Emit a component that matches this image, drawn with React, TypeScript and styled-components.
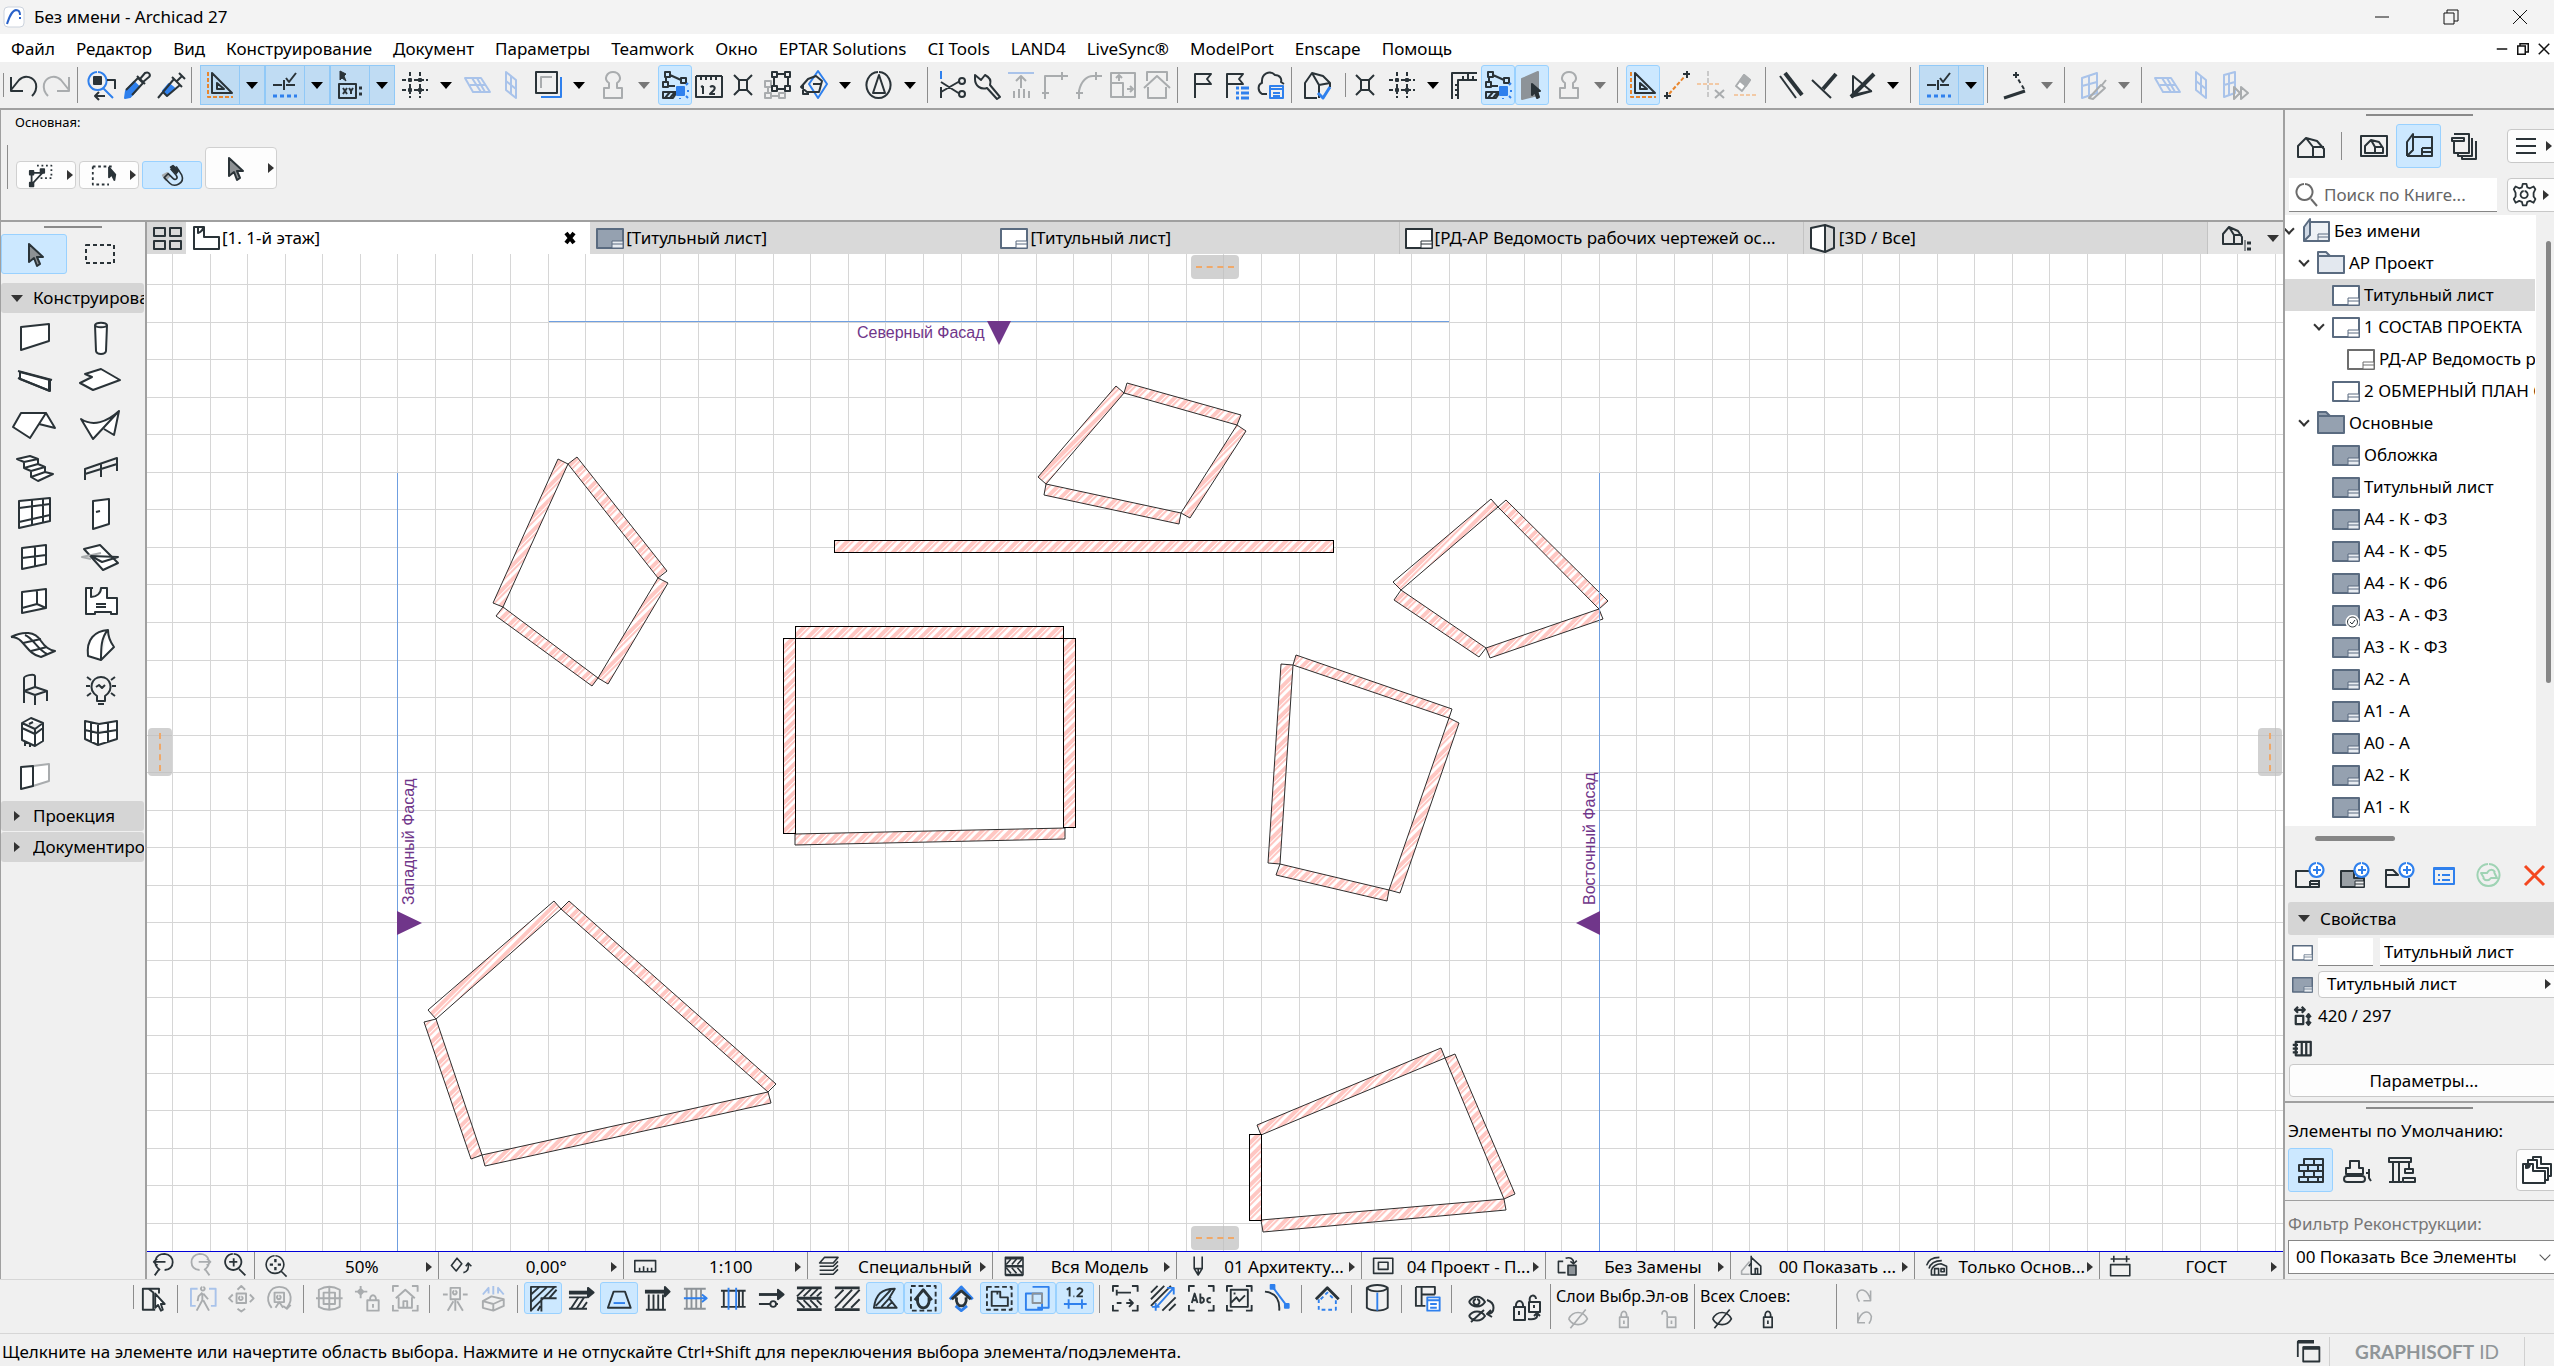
import React from "react";
import styled, { createGlobalStyle, css } from "styled-components";

const ink = "#2a3338";
const blue = "#2f80ed";
const grey = "#a9acae";
const pale = "#a9c3ea";
const orange = "#e8862e";
const peach = "#f2c9a5";
const line = "#a0a0a0";
const slate = "#5a6b80";
const steel = "#95a1b0";

const Global = createGlobalStyle`
  * { box-sizing: border-box; }
  html, body, #root { margin: 0; height: 100%; overflow: hidden; }
  body { background: #f0f0f0; color: #000; font: 17px/24px "Noto Sans", "Open Sans", sans-serif; }
  button, input, select { font: inherit; color: inherit; margin: 0; }
  button { background: none; border: 0; padding: 0; }
`;

/* ---------- icons ---------- */

type Stroke = { c?: string; d: string; f?: string; w?: number; dash?: string };

const icons: Record<string, Stroke[]> = {
  undo: [{ d: "M2 6V20H14M2 19L10 9C16 3 25 6 27 13C28 18 26 22 23 25" }],
  redo: [{ c: grey, d: "M26 6V20H14M26 19L18 9C12 3 3 6 1 13C0 18 2 22 5 25" }],
  find: [
    { c: blue, d: "M9 1A9 9 0 1 1 8 1M14 17L24 27", w: 2 },
    { f: ink, d: "M5 6H12V13H5z" },
    { d: "M18 9H26V18M6 25H16M10 21L6 25L10 29" },
  ],
  pick: [
    { c: blue, f: blue, d: "M3 20L11 11L16 16L7 26L2 27z" },
    { d: "M3 19L15 7L20 12L9 24M14 5L22 13M17 8L22 2C26 0 28 4 26 6L20 11" },
  ],
  inject: [
    { c: blue, f: blue, d: "M6 20L12 13L17 17L10 24z" },
    { d: "M1 27L6 21L17 8L23 14L10 25L6 21M15 6L25 16M20 10L25 5M22 2L28 8" },
  ],
  tri: [
    { c: orange, d: "M2 1V26H27", dash: "4 2" },
    { d: "M6 2V22H26zM11 12V18H18z" },
  ],
  snap: [
    { d: "M2 14H11M15 14H24M13 9V19M15 7L18 11L25 2" },
    { c: blue, d: "M2 25H26", dash: "4 3", w: 3 },
  ],
  xy: [
    { f: ink, d: "M4 0V9L6 7L10 10L8 5L10 3z", w: 1 },
    { d: "M3 13H20V27H3zM7 17L11 23M11 17L7 23M13 17L15 20L17 17M15 20V23" },
    { d: "M23 17H26M23 23H26", w: 3 },
  ],
  grid: [{ d: "M9 1V27M19 1V27M1 9H27M1 19H27", dash: "4 2" }, { d: "M7 9H11M9 7V11M17 9H21M19 7V11M7 19H11M9 17V21M17 19H21M19 17V21", w: 3 }],
  plane: [{ c: pale, d: "M2 7H18L27 21H10zM7 14H22M9 7L18 21M14 7L22 21" }],
  vplane: [{ c: pale, d: "M9 1L19 9V27L9 19zM14 5V23M9 10L19 18" }],
  frame: [{ c: blue, d: "M7 26H27V6" }, { d: "M2 1H23V22H2z" }, { c: grey, d: "M7 17V6H18" }],
  stamp: [{ c: grey, d: "M10 12C4 8 8 1 14 1C20 1 24 8 18 12V17H23V27H5V17H10z" }],
  poly: [
    { d: "M4 1H9V6H4zM20 7H25V12H20zM2 11H7V16H2zM9 4L20 9M5 6V11M7 15H14M2 21H16L12 27H2zM4 27L9 21M9 27L14 21" },
    { c: blue, f: blue, d: "M16 16H23V24H16z" },
    { c: blue, d: "M25 14L27 12M26 20H28M25 25L27 27M19 27V28" },
  ],
  ruler: [{ d: "M1 5V26H27V5M1 5H27M6 5V9M11 5V9M16 5V9M21 5V9M8 15V23M6 16L8 15M15 16C18 14 21 16 19 19L15 23H20" }],
  cross: [{ d: "M5 4L11 10M23 4L17 10M5 24L11 18M23 24L17 18M10 9H18V19H10z" }],
  group: [{ c: grey, d: "M2 10H8V16H2zM2 22H8V27H2zM16 22H22V27H16zM5 16V22M8 25H16" }, { d: "M9 1H14V6H9zM22 1H27V6H22zM9 15H14V20H9zM22 15H27V20H22zM14 3H22M11 6V15M25 6V15M14 18H22" }],
  dia: [{ c: blue, d: "M18 0L27 13L18 27L9 13z" }, { d: "M1 16L8 8L16 5L22 10L19 21H7zM13 13H22M3 14V23H9" }],
  circ: [{ d: "M14 1A12 13 0 1 1 13 1M14 4L20 22H8z" }],
  cut: [{ c: blue, d: "M2 0V8" }, { d: "M2 16V27M2 11L21 23M2 21L21 10M20 10A3 3 0 1 1 26 10A3 3 0 1 1 20 10M20 23A3 3 0 1 1 26 23A3 3 0 1 1 20 23" }],
  wrench: [{ d: "M2 4L8 9L12 4C20 8 17 13 17 14L27 26L24 28L14 17C8 19 2 15 2 8z" }],
  elev: [{ c: pale, d: "M1 2H27" }, { c: grey, d: "M14 5V17M9 10L14 5L19 10M7 20V27M12 18V27M17 18V27M22 20V27" }],
  corner: [{ c: grey, d: "M4 28V5H27M1 22H8M21 1V9" }],
  fillet: [{ c: grey, d: "M4 28V20C6 10 12 5 18 5H27M1 22H8M21 1V9" }],
  resize: [{ c: grey, d: "M2 2H26V26H2zM2 12H14V26M10 10V5M7 7L10 4L13 7M18 18H23M21 15L24 18L21 21" }],
  home: [{ c: grey, d: "M4 10V1H24V10M1 17L14 5L27 17M5 16V27H23V16", w: 2 }],
  flag: [{ d: "M6 27V3H22L18 8L22 13H6" }],
  flagl: [{ d: "M4 27V3H20L16 8L20 13H4" }, { c: blue, d: "M13 17H16M18 17H26M13 22H16M18 22H26M13 27H16M18 27H26", w: 3 }],
  cloud: [{ d: "M10 23H5C0 20 1 13 5 12C4 2 13 -1 18 4C23 4 25 8 24 11L27 13" }, { c: blue, d: "M13 15H26V27H13zM13 18H26M16 22H23M16 25H23" }],
  hcheck: [{ d: "M14 27H2V12L9 2L20 5L27 12V16M9 2L16 14M16 14L27 12M16 14V27" }, { c: blue, d: "M15 22L20 27L27 16", w: 3 }],
  rcorner: [{ d: "M2 28V2H27M8 28V9H27M5 14H8M5 19H8M5 24H8M13 5V9M18 3V9M23 5V9" }],
  wallp: [{ c: "#8d9398", f: "#8d9398", d: "M4 8L20 1V24L4 28z" }, { f: ink, d: "M14 13V24L17 21L19 27L21 26L19 20H22z" }],
  oline: [{ c: orange, d: "M6 23L22 5", dash: "4 2" }, { d: "M1 25H8M4 21V28M20 3H27M24 0V7" }],
  ocross: [{ c: peach, d: "M0 13H24", dash: "4 2" }, { c: "#c9c9c9", d: "M11 0V28", dash: "5 2" }, { c: grey, d: "M18 19L27 27M27 19L18 27" }],
  erase: [{ c: grey, f: "#fff", d: "M5 15L13 4L19 9L11 20z" }, { c: grey, f: grey, d: "M9 10L13 4L19 9L15 15z" }, { c: peach, d: "M3 24H27", dash: "4 2" }],
  para: [{ d: "M3 5L19 27" }, { d: "M8 2L25 24", w: 4 }],
  perp: [{ d: "M1 9L20 27" }, { d: "M12 18L25 3", w: 4 }],
  angle: [{ d: "M3 26L26 3", w: 4 }, { d: "M5 24V5L23 20zM3 26L24 20" }],
  gangle: [{ d: "M2 27L23 20", w: 3 }, { d: "M22 18L16 8", dash: "4 3" }, { d: "M14 1V7M11 4H17" }],
  gpick: [{ c: pale, d: "M3 7L18 2V22L3 27zM10 5V24M3 15L18 11" }, { c: grey, d: "M10 27L22 14L26 17L14 28zM23 14L27 9" }],
  gnext: [{ c: pale, d: "M3 4L14 1V22L3 26zM3 14L14 11M8 3V24" }, { c: grey, d: "M13 16L19 22L13 28zM20 16L27 22L20 28z" }],
  /* info box */
  poly2: [{ f: ink, d: "M2 10H6V14H2zM14 8H18V12H14zM2 23H6V27H2z" }, { d: "M4 12H16L4 25z" }, { d: "M10 4H26V18H14", dash: "2 3" }],
  marqc: [{ d: "M2 5H24M2 5V25H20", dash: "3 3" }, { f: ink, d: "M20 6V17L23 14L26 20L27 14z" }],
  magnet: [{ f: ink, d: "M12 4L15 2L22 8L19 12z" }, { c: grey, f: grey, d: "M2 14L8 11L11 15L6 20z" }, { d: "M19 3L26 14C30 24 17 30 11 24L4 17L9 12L15 18C18 21 22 18 19 14L12 6" }],
  cursor: [{ f: "#8d9194", d: "M9 4V22L14 18L17 26L20 24L17 17H23z" }],
  marquee: [{ d: "M1 7H29V25H1z", dash: "4 3" }],
  close: [{ c: "#000", d: "M9 9L17 19M17 9L9 19", w: 4 }],
  /* tabs and panels */
  four: [{ d: "M1 4H12V12H1zM17 4H28V12H17zM1 17H12V25H1zM17 17H28V25H17z" }],
  plan: [{ f: "#fff", d: "M2 3H12V13H27V25H2zM6 3V9C9 8 11 6 11 3" }],
  sheet: [{ c: slate, f: "#fff", d: "M1 5H27V24H1z" }, { c: slate, f: "#fff", d: "M16 17H27V24H16zM16 20H27", w: 1 }],
  sheetd: [{ c: ink, f: "#fff", d: "M1 5H27V24H1z" }, { c: ink, f: "#fff", d: "M16 17H27V24H16zM16 20H27", w: 1 }],
  sheetg: [{ c: "#6d6d6d", f: "#fff", d: "M1 5H27V24H1z" }, { c: "#6d6d6d", f: "#fff", d: "M16 17H27V24H16zM16 20H27", w: 1 }],
  master: [{ c: slate, f: steel, d: "M1 5H27V24H1z" }, { c: slate, f: "#e8ecf1", d: "M16 17H27V24H16zM16 20H27", w: 1 }],
  masterc: [{ c: slate, f: steel, d: "M1 5H27V24H1z" }, { c: "#fff", f: "#fff", d: "M21 15A6 6 0 1 1 20 15z" }, { f: "#fff", d: "M21 16A5 5 0 1 1 20 16z", w: 1 }, { d: "M18 21L20 23L23 19", w: 1 }],
  cube: [{ f: "#fff", d: "M2 4L16 1V28L2 24z" }, { d: "M16 1L25 4V24L16 28" }],
  hview: [{ d: "M1 20V10L7 3L16 7L20 13V20zM7 3L12 11V20M12 11H20" }, { d: "M23 16V27", w: 1 }, { d: "M25 19H29M25 25H29", w: 3 }],
  hproj: [{ d: "M1 25V14L9 6L20 9L27 17V25zM9 6L16 15M16 15H27M16 15V25" }],
  hframe: [{ d: "M1 4H27V24H1zM5 21V14L11 8L19 10L23 16V21zM11 8L15 15V21M15 15H23" }],
  book: [{ f: "none", d: "M9 5H27V24H2M2 24V10L8 2V18L2 24M17 16H27M17 16V24M17 20H27" }],
  bookp: [{ c: slate, f: "#eef1f5", d: "M9 5H27V24H2" }, { c: slate, f: "#cfd8e4", d: "M2 24V10L8 2V18z" }, { c: slate, d: "M16 17H27M16 17V24M16 20H27", w: 1 }],
  pages: [{ d: "M4 2H19V21H4V10M2 6H14V9H2zM8 21V24H22V6M12 24V27H26V9" }],
  menu: [{ d: "M4 7H24M4 14H24M4 21H24" }],
  lens: [{ c: "#6b6b6b", d: "M12 3A8 8 0 1 1 11 3M18 18L24 25" }],
  gear: [
    { d: "M12 2H16L17 6L20 7L24 5L26 8L24 12L24 16L26 19L24 23L20 21L17 22L16 26H12L11 22L8 21L4 23L2 19L4 16L4 12L2 8L4 5L8 7L11 6z" },
    { d: "M14 10A4 4 0 1 1 13 10" },
  ],
  folder: [{ c: slate, f: "#e3e8ef", d: "M1 24V3H9L13 7H27V24zM1 7H13" }],
  folderd: [{ c: slate, f: steel, d: "M1 24V3H9L13 7H27V24zM1 7H13" }],
  newl: [{ d: "M14 10H1V26H24V19M15 20H24M15 20V26M15 23H24" }, { c: blue, f: "#fff", d: "M22 2A7 7 0 1 1 21 2M22 5V13M18 9H26" }],
  newm: [{ f: "#9aa0a5", d: "M14 10H1V26H24V17H14z" }, { f: "#f0f0f0", d: "M15 20H24V26H15zM15 23H24", w: 1 }, { c: blue, f: "#fff", d: "M22 2A7 7 0 1 1 21 2M22 5V13M18 9H26" }],
  newf: [{ d: "M1 9H8L13 14H1zM1 9V26H24V17" }, { c: blue, f: "#fff", d: "M22 2A7 7 0 1 1 21 2M22 5V13M18 9H26" }],
  list: [{ c: blue, d: "M4 7H24V23H4z" }, { c: blue, d: "M4 8H24M8 14H10M12 14H20M8 19H10M12 19H20", w: 2 }],
  sync: [{ c: "#9fd3b4", d: "M14 3A11 11 0 1 1 13 3M9 17L6 12H12C14 8 18 8 20 11M19 11L22 17H16C14 20 10 20 8 17" }],
  del: [{ c: "#f4471f", d: "M5 5L24 24M24 5L5 24", w: 3 }],
  dims: [{ d: "M5 13H15V24H5zM4 5H17M8 1L4 5L8 9M13 1L17 5L13 9M22 11V25M19 15L22 11L25 15M19 21L22 25L25 21", w: 3 }],
  sub: [{ d: "M5 5H25V23H5zM13 5V23M19 5V23M1 9H8M1 14H8M1 19H8", w: 3 }],
  bricks: [{ d: "M7 3H26V9H7zM2 9H21V15H2zM7 15H26V21H7zM2 21H21V26H2zM17 3V9M11 9V15M17 15V21M11 21V26M26 9V15H21M26 21V26H21" }],
  dozer: [{ d: "M4 18V12H8V5H17V12H21V18zM5 20H20A3 3 0 0 1 20 26H5A3 3 0 0 1 5 20M24 17H27M27 13V22L29 25" }],
  crane: [{ d: "M2 2H24V6H2zM6 6V26M12 6V26M2 26H15M22 6V13M18 13H26V17H18zM16 22H28V26H16z" }],
  stack: [{ f: "#fff", d: "M12 1H20V8H30V20H12z" }, { f: "#fff", d: "M7 4H16V12H27V24H7z" }, { f: "#fff", d: "M2 8H12V15H24V27H2zM5 8V12C8 12 9 10 9 8" }],
  wins: [{ d: "M2 20V3H20", w: 2 }, { d: "M2 3H20M8 10H26", w: 4 }, { d: "M8 9H26V25H8z" }],
  /* quick options */
  zback: [{ d: "M9 20C0 14 3 2 14 2C26 3 26 20 14 20M8 19L3 26M2 11H15M6 7L2 11L6 15" }],
  zfwd: [{ c: grey, d: "M19 20C28 14 25 2 14 2C2 3 2 20 14 20M20 19L25 26M26 11H13M22 7L26 11L22 15" }],
  zin: [{ d: "M13 2A9 9 0 1 1 12 2M19 19L26 26M13 7V16M8 11H17" }],
  zfit: [{ d: "M13 1A11 11 0 1 1 12 1M20 20L27 27" }, { d: "M13 5V9M13 15V19M6 12H10M16 12H20", w: 3 }],
  rot: [{ d: "M10 4L16 11L9 20L3 13zM18 22C23 21 25 17 24 11M21 14L24 10L28 14" }],
  scale: [{ d: "M1 7H27V21H1zM7 21V16M12 21V14M17 21V16M22 21V16" }],
  layers: [{ d: "M8 3H25L19 10H2zM2 14H19L25 8M2 19H19L25 13M2 24H19L25 18" }],
  hatch: [{ d: "M3 3H25V25H3z" }, { d: "M3 4H25M3 14H25M3 25H25", w: 3 }, { d: "M4 12L10 5M11 12L17 5M18 12L24 5M4 16L10 23M11 16L17 23M18 16L24 23" }],
  pen: [{ d: "M9 2V17L14 25L19 17V2M9 17H19M14 18V25" }],
  layout: [{ d: "M2 4H26V23H2zM8 9H20V18H8z" }],
  swap: [{ d: "M9 8H3V22H12M12 4C18 2 22 5 22 10M18 8L22 11L26 7" }, { f: "#8d9398", d: "M15 13H25V25H15z" }],
  reno: [{ c: grey, d: "M12 8L2 20V24H12" }, { d: "M14 1V24H26V14L14 3M19 24V17H22V24M11 14L14 10" }],
  only: [{ d: "M2 13C4 6 10 3 18 3M5 17C7 10 13 7 21 7M8 19C9 14 15 11 20 11L27 14V25H8zM12 25V17H17V25M20 17H24V21H20z" }],
  dimh: [{ d: "M2 5H26M6 1V9M22 1V9M2 12H26V26H2z" }],
  /* bottom tool bar */
  arrowp: [{ d: "M16 26H3V4H20V9M9 4L14 8V26" }, { f: "#fff", d: "M16 9V24L19 21L22 27L24 26L22 20H26z" }],
  walk: [{ c: pale, d: "M8 4H1V22H6M20 4H27V22H22" }, { c: grey, d: "M14 2A2 2 0 1 1 13 2M13 8L9 12L8 17M14 9L19 15M13 9V16L7 27M14 16L20 27" }],
  cam: [{ c: grey, d: "M10 5L14 1L18 5M10 25L14 28L18 25M9 9H19V19H9zM14 12A2 2 0 1 1 13 12M5 10L1 14L5 18M23 10L27 14L23 18" }],
  orbit: [{ c: grey, d: "M6 24C-2 14 4 2 14 2C25 2 30 14 22 24M18 22L22 25L26 21M9 8H19V18H9zM14 11A2 2 0 1 1 13 11M10 24L14 18L18 24" }],
  globe: [{ c: grey, d: "M3 5C10 1 18 1 25 5V23C18 27 10 27 3 23zM0 14H28M14 1V27M8 8H20V20H8z" }],
  snlock: [{ c: grey, d: "M7 1V14M1 7H14M7 4L10 7L7 10L4 7zM14 16H26V27H14zM17 16C16 9 24 9 23 16M20 20V24" }],
  hfocus: [{ c: grey, d: "M1 7V1H7M21 1H27V7M27 21V27H21M7 27H1V21M4 14L14 5L24 14M7 13V24H21V13M12 24V17H16V24" }],
  tri3: [{ c: grey, d: "M9 3H19V15H9zM14 6A2 2 0 1 1 13 6M1 10H6M22 10H27M14 16V27M12 17L6 27M16 17L22 27" }],
  mirror: [{ c: pale, d: "M3 10L9 3V9M25 10L19 3V9M14 1V10" }, { c: grey, d: "M3 17L12 12L25 15V22L14 27L3 24zM3 17L14 20V27M14 20L25 15" }],
  lhatch: [{ d: "M1 28V2H28M12 28V14H28M1 10L10 2M1 18L18 2M1 27L26 2M8 27L11 22M20 14L28 5" }],
  harrow: [{ d: "M1 13H20M1 25H20" }, { d: "M3 25L11 13M9 25L17 13M15 25L20 18" }, { d: "M1 8H24", w: 4 }, { f: ink, d: "M21 3L27 8L21 13z" }],
  trap: [{ d: "M8 7H20L26 24H2z" }, { c: blue, d: "M8 19H20" }],
  colarr: [{ d: "M5 10V25M10 10V25M15 10V25M20 10V25M2 26H23" }, { d: "M1 7H24", w: 4 }, { f: ink, d: "M22 2L27 7L22 12z" }],
  colblue: [{ c: "#8d9398", d: "M2 4H25M2 25H25M5 4V25M10 4V25M15 4V25M20 4V25" }, { c: blue, d: "M2 14H25M21 10L26 14L21 18" }],
  colin: [{ d: "M1 6H27M1 23H27M4 6V23M24 6V23M20 6V23" }, { c: blue, d: "M9 3V26M17 3V26" }],
  marr: [{ d: "M1 10H22", w: 3 }, { f: ink, d: "M21 5L27 10L21 15z" }, { d: "M1 20H13M13 20A3 3 0 1 1 19 20A3 3 0 1 1 13 20M19 20H21" }],
  hh: [{ d: "M1 3H27M1 14H27M1 26H27", w: 3 }, { d: "M1 12L9 4M8 12L16 4M15 12L23 4M22 12L27 7M1 16L9 24M8 16L16 24M15 16L23 24M22 16L27 21" }],
  hh1: [{ d: "M1 3H27M1 26H27", w: 3 }, { d: "M1 14L10 5M1 24L19 5M9 24L27 5M18 24L27 15" }],
  slant: [{ d: "M2 24C4 10 10 4 24 4L18 14L26 24zM4 22L20 5M10 23L20 12M16 23L21 18" }],
  node: [{ d: "M1 1H27V27H1z", dash: "5 3" }, { d: "M5 16L14 5L23 16M8 13C6 28 22 28 20 13", w: 3 }],
  noded: [{ c: blue, d: "M2 15L14 2L26 15M8 22L14 27L20 22", w: 3 }, { d: "M4 15L14 6L24 15M9 13C7 25 21 25 19 13", w: 3 }],
  zone: [{ d: "M1 2H27V26H1z", dash: "5 3" }, { d: "M6 7H15V13H23V22H6zM12 7V10" }],
  overlap: [{ c: blue, d: "M9 2H26V24H14M2 9H19V26H2z" }, { c: "#8d9398", d: "M9 9H19V19H9z" }],
  onetwo: [{ c: ink, d: "M5 5L8 3V12M12 12H13M16 5C18 2 23 4 21 7L16 12H22", w: 2 }, { c: blue, d: "M2 20H26M7 15V25M21 15V25" }],
  brk: [{ d: "M1 7V1H7M21 1H27V7M27 21V27H21M7 27H1V21M5 8H20M5 11V5M5 19H10M15 19H22M18 15L22 19L18 23" }],
  hblue: [{ d: "M1 8L8 1M1 15L15 1M1 22L22 1M13 27L27 13M20 27L27 20" }, { c: blue, d: "M6 24L24 4M18 3H25V10M2 23H10M6 19V27" }],
  abc: [{ d: "M1 7V1H7M21 1H27V7M27 21V27H21M7 27H1V21M4 19L7 9L10 19M5 16H9M13 9V19M13 14C17 11 19 19 13 19M24 14C19 12 19 20 24 18", w: 2 }],
  pic: [{ d: "M1 7V1H7M21 1H27V7M27 21V27H21M7 27H1V21M5 5H23V23H5zM5 19L11 13L14 17L20 11M9 8V10" }],
  curve: [{ d: "M1 7C12 8 17 14 16 27" }, { c: blue, d: "M9 2L24 22", w: 2 }, { c: blue, f: blue, d: "M7 0H11V4H7zM22 20H26V24H22z" }],
  roofd: [{ d: "M2 15L14 3L26 15", w: 3 }, { c: blue, d: "M5 15V26H23V15M7 15L14 8L21 15", dash: "4 3" }],
  fold: [{ d: "M3 3C8 8 20 8 25 3V24C20 28 8 28 3 24zM3 3C8 -1 20 -1 25 3" }, { c: blue, d: "M14 8V27" }],
  sched: [{ d: "M2 2H22V10M2 2V22H12M8 10V22M8 10H22M8 2V10" }, { c: blue, f: "#fff", d: "M14 13H27V27H14zM14 16H27M17 20H24M17 24H24" }],
  eyes: [{ d: "M2 8C6 1 14 1 18 8C14 14 6 14 2 8M10 5A3 3 0 1 1 9 5M2 22C6 16 14 16 18 22C14 28 6 28 2 22M4 28L17 16M20 6C29 9 28 19 21 20M24 16L20 20L25 23" }],
  locks: [{ d: "M1 13H12V26H1zM3 13C2 5 11 5 10 13M6 17V21M16 8H27V18H16zM17 8C15 0 23 0 23 5M21 11V14M15 25C22 26 25 24 24 20M21 22L24 19L27 22" }],
  eyeoff: [{ d: "M2 14C7 4 19 4 24 14C19 23 7 23 2 14M4 25L22 3" }],
  eyeoffg: [{ c: grey, d: "M2 14C7 4 19 4 24 14C19 23 7 23 2 14M4 25L22 3" }],
  lock: [{ d: "M9 12H19V24H9zM11 12C9 3 19 3 17 12M14 16V20" }],
  lockg: [{ c: grey, d: "M9 12H19V24H9zM11 12C9 3 19 3 17 12M14 16V20" }],
  unlock: [{ c: grey, d: "M12 12H22V24H12zM12 12C13 2 5 3 6 9M17 16V20" }],
  undos: [{ c: grey, d: "M6 8V21H15M6 20C10 6 20 4 23 13C23 18 22 19 20 22" }],
  redos: [{ c: grey, d: "M22 8V21H13M22 20C18 6 8 4 5 13C5 18 6 19 8 22" }],
};

const tools: Record<string, Stroke[]> = {
  wall: [{ f: "#fff", d: "M8 8L36 5V22L8 31z" }],
  column: [{ f: "#fff", d: "M16 6C17 3 27 3 28 6L27 32C26 36 18 36 17 32zM16 6C17 9 27 9 28 6" }],
  beam: [{ f: "#fff", d: "M7 9L37 17V28L7 16z" }, { d: "M5 8L39 17M5 15L37 28M36 17V28" }],
  slab: [{ f: "#fff", d: "M1 20L14 27L41 17L22 6L6 11L13 14z" }],
  roof: [{ f: "#fff", d: "M0 20L8 6H33L17 31zM33 6L42 21L26 17" }],
  shell: [{ f: "#fff", d: "M2 12C14 20 28 15 40 4L14 32zM40 4L35 28L25 22" }],
  stair: [{ f: "#fff", d: "M4 8L17 5L25 8L11 11zM11 11V17L18 20V26L25 30L40 23L32 21V16L25 13V8M11 17L25 13M18 20L32 16M18 26L32 21" }],
  rail: [{ d: "M6 29V18L38 7V20M6 23L38 13M22 13V26" }],
  curtain: [{ f: "#fff", d: "M6 6L37 3V26L6 33z" }, { d: "M19 5V30M30 4V28M6 13L37 9M6 27L37 20" }],
  door: [{ f: "#fff", d: "M14 6L30 4V29L14 34zM17 17L21 16" }],
  window: [{ f: "#fff", d: "M9 9L33 6V25L9 30zM22 8V27M9 19L33 16" }],
  sky: [{ f: "#fff", d: "M5 10L21 6L39 24L24 31z" }, { c: grey, d: "M22 14L3 18L12 20" }, { d: "M12 17L39 18L23 23z" }],
  opening: [{ f: "#fff", d: "M9 9L33 6V25L9 30zM24 8V21L9 25M24 21L33 25" }],
  zone: [{ f: "#fff", d: "M7 5H12V14C18 14 22 10 22 5H28V15H38V31H32V29H16V31H7zM12 5H14M17 21H27M17 24H27" }],
  mesh: [{ f: "#fff", d: "M-2 10C10 4 22 4 28 14C32 20 36 23 42 24L28 30C18 28 14 20 8 14C5 11 2 10 -2 10" }, { d: "M12 8C20 11 24 22 34 27M10 16L28 12M18 24L34 20" }],
  morph: [{ f: "#fff", d: "M9 29C7 12 16 4 29 3C29 10 32 16 35 20L22 33zM29 3C22 10 22 22 22 33" }],
  chair: [{ d: "M11 32V7C11 5 21 2 22 5V16M11 20L22 16L34 20L22 24zM22 24V34M34 20V30" }],
  lamp: [{ d: "M18 25C8 18 13 6 22 6C31 6 36 18 26 25V30H18zM19 33H25M17 16L20 14L23 17L26 14M7 15H11M33 15H37M8 6L12 9M36 6L32 9M8 25L12 22M36 25L32 22" }],
  object: [{ f: "#fff", d: "M9 8L18 3L30 8V26L22 31L9 25zM9 8L22 14L30 8M22 14V31M9 13L22 19L30 13M16 9L20 7M12 27V31M17 29V32" }],
  cwall: [{ f: "#fff", d: "M6 6L20 9L38 6V24L19 30L6 24zM19 9V30M12 8V27M29 8V27M6 15L19 18L38 15" }],
  wend: [{ c: grey, f: "#fff", d: "M20 7L36 5V22L20 27" }, { f: "#fff", d: "M8 8L20 7V27L8 30z" }],
};

const Drawing = styled.svg`
  display: block;
  flex: none;
  overflow: visible;
`;

function Icon({ name, w = 28, h = 28, scale = 1 }: { name: string; w?: number; h?: number; scale?: number }) {
  const set = w > 30 && tools[name] ? tools : icons;
  return (
    <Drawing width={w * scale} height={h * scale} viewBox={`0 0 ${w} ${h}`} fill="none" strokeWidth={2} strokeLinejoin="round" aria-hidden="true">
      {set[name].map((s, i) => (
        <path key={i} d={s.d} stroke={s.c ?? ink} fill={s.f ?? "none"} strokeWidth={s.w} strokeDasharray={s.dash} />
      ))}
    </Drawing>
  );
}

/* ---------- shell ---------- */

const Window = styled.div`
  display: flex;
  flex-direction: column;
  height: 100vh;
  overflow: hidden;
  white-space: nowrap;
`;

const TitleBar = styled.header`
  display: flex;
  align-items: center;
  flex: none;
  height: 34px;
  padding-left: 4px;
  gap: 10px;
  background: #f3f3f3;
`;

const Controls = styled.div`
  display: flex;
  align-self: stretch;
  margin-left: auto;
`;

const Control = styled.button<{ $w: number }>`
  display: grid;
  place-items: center;
  width: ${(p) => p.$w}px;
`;

const MenuBar = styled.nav`
  display: flex;
  align-items: center;
  flex: none;
  height: 28px;
  padding: 2px 0 0 11px;
  gap: 21px;
  background: #fff;
`;

const ToolBar = styled.div`
  display: flex;
  align-items: center;
  flex: none;
  height: 48px;
  border-bottom: 2px solid ${line};
`;

const Divider = styled.span<{ $w?: number; $at?: number; $before?: number; $h?: number }>`
  flex: none;
  width: ${(p) => p.$w ?? 12}px;
  height: ${(p) => p.$h ?? 36}px;
  margin-left: ${(p) => p.$before ?? 0}px;
  background: linear-gradient(#8c8c8c, #8c8c8c) ${(p) => p.$at ?? 3}px 0 / 1px 100% no-repeat;
`;

const activeLook = css`
  background: #cce8ff;
  border: 1px solid #99d1ff;
  border-radius: 3px;
`;

const Tool = styled.button<{ $on?: boolean; $w?: number; $h?: number }>`
  display: flex;
  align-items: center;
  justify-content: center;
  flex: none;
  width: ${(p) => p.$w ?? 34}px;
  height: ${(p) => p.$h ?? 40}px;
  ${(p) => p.$on && activeLook}
`;

const Split = styled.div<{ $on?: boolean }>`
  display: flex;
  flex: none;
  width: 65px;
  height: 40px;
  padding-left: ${(p) => (p.$on ? 0 : 3)}px;
  ${(p) => p.$on && css`background: #c0dcf3; border: 1px solid #91c9f7;`}
`;

const SplitMain = styled.button<{ $on?: boolean }>`
  display: grid;
  place-items: center;
  width: ${(p) => (p.$on ? 39 : 34)}px;
  ${(p) => p.$on && css`border-right: 1px solid #91c9f7;`}
`;

const SplitDrop = styled.button`
  display: grid;
  place-items: center;
  flex: 1;
`;

const Down = styled.span<{ $c?: string }>`
  border: 6px solid transparent;
  border-top: 7px solid ${(p) => p.$c ?? "#000"};
  border-bottom: 0;
`;

const Right = styled.span`
  flex: none;
  border: 5px solid transparent;
  border-left: 6px solid #333;
  border-right: 0;
`;

type Item = { k: "i" | "on" | "split" | "spliton" | "sep" | "short"; n?: string; dim?: boolean };
const I = (...names: string[]): Item[] => names.map((n) => ({ k: "i", n }));
const on = (n: string): Item => ({ k: "on", n });
const split = (n: string, dim = false): Item => ({ k: "split", n, dim });
const splitOn = (n: string): Item => ({ k: "spliton", n });
const sep: Item = { k: "sep" };

const topItems: Item[] = [
  ...I("undo", "redo"), sep, ...I("find", "pick", "inject"), sep,
  splitOn("tri"), splitOn("snap"), splitOn("xy"), split("grid"), ...I("plane", "vplane"),
  split("frame"), split("stamp", true), on("poly"), ...I("ruler", "cross", "group"),
  split("dia"), split("circ"), sep,
  ...I("cut", "wrench", "elev", "corner", "fillet", "resize", "home"), sep,
  ...I("flag", "flagl", "cloud"), sep, ...I("hcheck"), { k: "short" },
  ...I("cross"), split("grid"), ...I("rcorner"), on("poly"), on("wallp"), split("stamp", true), sep,
  on("tri"), ...I("oline", "ocross", "erase"), sep, ...I("para", "perp"), split("angle"), sep,
  splitOn("snap"), sep, split("gangle", true), sep, split("gpick", true), sep,
  ...I("plane", "vplane", "gnext"),
];

function TopTool({ item }: { item: Item }) {
  if (item.k === "sep") return <Divider />;
  if (item.k === "short") return <Divider $before={8} $w={6} $h={24} />;
  const name = item.n as string;
  if (item.k === "split" || item.k === "spliton") {
    const active = item.k === "spliton";
    return (
      <Split $on={active}>
        <SplitMain $on={active} aria-label={name}><Icon name={name} /></SplitMain>
        <SplitDrop aria-label={name + " menu"}><Down $c={item.dim ? "#777" : undefined} /></SplitDrop>
      </Split>
    );
  }
  return <Tool $on={item.k === "on"} aria-label={name}><Icon name={name} /></Tool>;
}

const Body = styled.div`
  display: flex;
  flex: 1;
  min-height: 0;
`;

const Work = styled.div`
  display: flex;
  flex-direction: column;
  flex: 1;
  min-width: 0;
`;

const InfoBox = styled.section`
  flex: none;
  height: 112px;
  padding: 2px 14px 0 6px;
  border-left: 1px solid ${line};
  border-bottom: 2px solid ${line};
`;

const InfoTitle = styled.div`
  padding-left: 8px;
  font-size: 13px;
  line-height: 20px;
`;

const InfoRow = styled.div`
  display: flex;
  align-items: flex-end;
  gap: 3px;
  margin-top: 13px;
`;

const InfoGrip = styled.span`
  width: 6px;
  height: 44px;
  border-left: 1px solid #8c8c8c;
`;

const InfoButton = styled.button<{ $on?: boolean; $big?: boolean }>`
  display: flex;
  align-items: center;
  justify-content: ${(p) => (p.$on ? "center" : "space-between")};
  width: ${(p) => (p.$big ? 72 : 60)}px;
  height: ${(p) => (p.$big ? 42 : 28)}px;
  padding: ${(p) => (p.$on ? 0 : p.$big ? "0 2px 0 14px" : "0 2px 0 11px")};
  background: #fdfdfd;
  border: 1px solid #d0d0d0;
  border-radius: 4px;
  ${(p) => p.$on && activeLook}
`;

const Stage = styled.div`
  display: flex;
  flex: 1;
  min-height: 0;
`;

/* ---------- tool box ---------- */

const ToolBox = styled.aside`
  flex: none;
  width: 147px;
  overflow: hidden;
  border-left: 1px solid ${line};
  border-right: 2px solid ${line};
`;

const Grip = styled.div<{ $w: number }>`
  width: ${(p) => p.$w}px;
  height: 2px;
  margin: 4px auto 0;
  background: #8a8a8a;
`;

const Pair = styled.div`
  display: grid;
  grid-template-columns: 66px 66px;
  grid-auto-rows: 44px;
  place-items: center;
  padding: 1px 0 2px 1px;
`;

const PairTop = styled(Pair)`
  margin: 4px 0 7px;
  padding: 0;
`;

const Section = styled.button`
  display: flex;
  align-items: center;
  width: 143px;
  height: 30px;
  margin-bottom: 1px;
  overflow: hidden;
  background: #d5d5d5;
  border-radius: 3px;
`;

const Mark = styled.span`
  display: grid;
  place-items: center;
  flex: none;
  width: 32px;
`;

const SectionText = styled.span`
  flex: 1;
  overflow: hidden;
  text-align: left;
`;

const toolNames = ["wall", "column", "beam", "slab", "roof", "shell", "stair", "rail", "curtain", "door", "window", "sky", "opening", "zone", "mesh", "morph", "chair", "lamp", "object", "cwall", "wend"];

/* ---------- tabs and drawing area ---------- */

const Center = styled.main`
  display: flex;
  flex-direction: column;
  flex: 1;
  min-width: 0;
`;

const Tabs = styled.div`
  display: flex;
  flex: none;
  height: 32px;
  background: #d9d9d9;
`;

const TabGrid = styled.button`
  display: grid;
  place-items: center;
  width: 39px;
`;

const Tab = styled.button<{ $on?: boolean; $edge?: boolean }>`
  display: flex;
  align-items: center;
  flex: 1;
  min-width: 0;
  gap: 2px;
  padding: 0 5px 0 5px;
  background: ${(p) => (p.$on ? "#fff" : "none")};
  border-left: 1px solid ${(p) => (p.$edge ? "#c3c3c3" : "transparent")};
`;

const TabText = styled.span`
  flex: 1;
  overflow: hidden;
  text-align: left;
  text-overflow: ellipsis;
`;

const TabMenu = styled.button`
  display: flex;
  align-items: center;
  justify-content: space-between;
  width: 76px;
  padding: 0 4px 0 14px;
  background: #e6e6e6;
  border-left: 1px solid #c3c3c3;
`;

const Canvas = styled.div`
  position: relative;
  flex: 1;
  min-height: 0;
  overflow: hidden;
  background: #fff;
  border-bottom: 1px solid #0000d8;
`;

const Sheet = styled.svg`
  display: block;
  width: 100%;
  height: 100%;
`;

const Handle = styled.span<{ $side: "top" | "bottom" | "left" | "right" }>`
  position: absolute;
  display: grid;
  place-items: center;
  background: rgba(190, 190, 190, 0.7);
  border-radius: 4px;
  &::after { content: ""; }
  ${(p) =>
    p.$side === "top" || p.$side === "bottom"
      ? css`
          ${p.$side}: 1px;
          left: 50%;
          width: 48px;
          height: 24px;
          margin-left: -24px;
          &::after { width: 38px; border-top: 2px dashed #f0a868; }
        `
      : css`
          ${p.$side}: 1px;
          top: 474px;
          width: 24px;
          height: 48px;
          &::after { height: 38px; border-left: 2px dashed #f0a868; }
        `}
`;

const slanted = [
  "558,459 568,464 503,607 493,603", "568,464 577,457 667,571 658,578", "658,578 668,583 608,684 598,678", "503,607 598,678 592,686 496,616",
  "554,901 561,909 436,1019 428,1010", "561,909 569,901 776,1084 768,1092", "768,1092 771,1103 485,1166 482,1155", "436,1019 482,1155 471,1159 424,1022",
  "1116,386 1124,393 1046,484 1038,477", "1124,393 1127,383 1241,415 1237,425", "1237,425 1246,431 1190,518 1181,513", "1046,484 1181,513 1179,524 1044,495",
  "795,834 1065,828 1065,839 795,845",
  "1491,499 1498,507 1401,590 1393,582", "1498,507 1506,500 1608,601 1599,609", "1599,609 1603,619 1490,658 1486,648", "1401,590 1486,648 1479,657 1394,600",
  "1281,664 1293,665 1280,864 1268,863", "1293,665 1296,655 1452,709 1449,718", "1449,718 1459,723 1400,893 1389,890", "1280,864 1389,890 1387,901 1276,875",
  "1441,1048 1445,1058 1261,1135 1257,1125", "1445,1058 1455,1054 1515,1194 1504,1199", "1504,1199 1506,1210 1263,1232 1261,1220",
];
const straight = [
  [834, 540, 499, 12], [795, 626, 268, 12], [783, 638, 12, 195], [1063, 638, 12, 189], [1249, 1134, 12, 86],
];
const pitch = 37.55;
const gridSteps = Array.from({ length: 110 }, (_, i) => Math.round(i * pitch));

function Plan() {
  return (
    <Sheet aria-label="1-й этаж">
      <defs>
        <pattern id="brick" width="10" height="10" patternUnits="userSpaceOnUse" patternTransform="rotate(45)">
          <path d="M1 0V10M3 0V10M6 0V10" stroke="#ff8f86" strokeWidth="1" />
        </pattern>
      </defs>
      <g shapeRendering="crispEdges" fill="#d6d6d6">
        {gridSteps.map((s) => <rect key={"v" + s} x={25 + s} y="0" width="1" height="100%" />)}
        {gridSteps.map((s) => <rect key={"h" + s} x="0" y={30 + s} width="100%" height="1" />)}
      </g>
      <g transform="translate(-147 -254)">
        <g fill="#fff" stroke="none">
          {slanted.map((p) => <polygon key={p} points={p} />)}
        </g>
        <g fill="url(#brick)" stroke="#2e2e2e" strokeWidth="1" strokeLinejoin="bevel">
          {slanted.map((p) => <polygon key={p} points={p} />)}
        </g>
        {straight.map(([x, y, w, h]) => (
          <g key={x + "-" + y}>
            <rect x={x} y={y} width={w} height={h} fill="#fff" />
            <rect x={x} y={y} width={w} height={h} fill="url(#brick)" />
            <rect x={x} y={y} width={w} height={h} fill="none" stroke="#000" shapeRendering="crispEdges" />
          </g>
        ))}
        <g fill="#6f9fe0" shapeRendering="crispEdges">
          <rect x="549" y="321" width="900" height="1" />
          <rect x="397" y="473" width="1" height="2000" />
          <rect x="1599" y="473" width="1" height="2000" />
        </g>
        <g fill="#70368a" fontFamily="'Liberation Sans', Arial, sans-serif" fontSize="16">
          <path d="M987 321H1011L999 345zM397 911V935L422 923zM1600 911V935L1576 923z" />
          <text x="857" y="338">Северный Фасад</text>
          <text transform="translate(414 905) rotate(-90)">Западный Фасад</text>
          <text transform="translate(1595 905) rotate(-90)">Восточный Фасад</text>
        </g>
      </g>
    </Sheet>
  );
}

/* ---------- quick options ---------- */

const Quick = styled.div`
  display: flex;
  flex: none;
  height: 27px;
`;

const QuickZoom = styled.div`
  display: flex;
  width: 107px;
`;

const QuickCell = styled.button`
  display: flex;
  align-items: center;
  flex: 1;
  min-width: 0;
  padding: 2px 6px 0 0;
  border-left: 1px solid #8c8c8c;
`;

const QuickIcon = styled.span`
  display: grid;
  place-items: center;
  flex: none;
  width: 42px;
`;

const QuickText = styled.span`
  flex: 1;
  overflow: hidden;
  text-overflow: ellipsis;
`;

const quick = [
  ["zfit", "50%"], ["rot", "0,00°"], ["scale", "1:100"], ["layers", "Специальный"], ["hatch", "Вся Модель"],
  ["pen", "01 Архитекту..."], ["layout", "04 Проект - П..."], ["swap", "Без Замены"], ["reno", "00 Показать ..."],
  ["only", "Только Основ..."], ["dimh", "ГОСТ"],
];

/* ---------- organizer ---------- */

const Panel = styled.aside`
  flex: none;
  width: 271px;
  overflow: hidden;
  border-left: 2px solid ${line};
`;

const PanelTabs = styled.div`
  display: flex;
  align-items: center;
  height: 44px;
  margin-top: 8px;
  padding-left: 3px;
`;

const PanelButton = styled.button<{ $h?: number }>`
  display: flex;
  align-items: center;
  flex: none;
  gap: 6px;
  width: 60px;
  height: ${(p) => p.$h ?? 34}px;
  padding-left: 4px;
  background: #fdfdfd;
  border: 1px solid #c8c8c8;
  border-radius: 4px;
`;

const Push = styled.span`
  flex: none;
  width: 21px;
`;

const SearchRow = styled.div`
  display: flex;
  gap: 10px;
  margin: 10px 0 3px;
  padding-left: 4px;
`;

const SearchBox = styled.label`
  display: flex;
  align-items: center;
  flex: none;
  width: 208px;
  height: 34px;
  padding-left: 4px;
  gap: 3px;
  background: #fff;
  border-bottom: 1px solid #868686;
`;

const SearchInput = styled.input`
  width: 160px;
  padding: 0;
  background: none;
  border: 0;
  outline: 0;
  &::placeholder { color: #666; opacity: 1; }
`;

const TreeWrap = styled.div`
  display: flex;
`;

const Tree = styled.ul`
  width: 251px;
  margin: 0;
  padding: 0 0 3px;
  list-style: none;
  overflow: hidden;
  background: #fff;
`;

const Row = styled.li<{ $level: number; $on?: boolean }>`
  display: flex;
  align-items: center;
  width: 250px;
  height: 32px;
  overflow: hidden;
  padding-left: ${(p) => p.$level * 15}px;
  background: ${(p) => (p.$on ? "#d9d9d9" : "none")};
`;

const Chevron = styled.span<{ $show: boolean }>`
  flex: none;
  width: 8px;
  height: 8px;
  margin: 0 9px 5px 0;
  transform: rotate(45deg);
  border: solid #333;
  border-width: 0 2px 2px 0;
  visibility: ${(p) => (p.$show ? "visible" : "hidden")};
`;

const RowText = styled.span`
  padding-left: 4px;
`;

const ScrollV = styled.span`
  width: 5px;
  height: 442px;
  margin: 26px 0 0 10px;
  background: #868686;
  border-radius: 3px;
`;

const ScrollH = styled.div`
  width: 80px;
  height: 5px;
  margin: 10px 0 0 30px;
  background: #868686;
  border-radius: 3px;
`;

const Actions = styled.div`
  display: flex;
  height: 61px;
  padding: 2px 0 0 1px;
`;

const PanelHead = styled.button`
  display: flex;
  align-items: center;
  width: 280px;
  height: 33px;
  margin-left: 3px;
  background: #d5d5d5;
  border-radius: 3px;
`;

const Fields = styled.div`
  display: grid;
  grid-template-columns: 26px 240px;
  grid-auto-rows: 28px;
  row-gap: 4px;
  align-items: center;
  margin: 3px 0 2px 7px;
`;

const NamePair = styled.div`
  display: grid;
  grid-template-columns: 55px 200px;
  gap: 7px;
`;

const Field = styled.input`
  width: 100%;
  height: 28px;
  padding: 0 4px;
  background: #fff;
  border: 0;
  border-bottom: 1px solid #868686;
`;

const MasterButton = styled.button`
  display: flex;
  align-items: center;
  justify-content: space-between;
  width: 240px;
  height: 27px;
  padding: 0 6px 0 8px;
  background: #fdfdfd;
  border: 1px solid #c8c8c8;
  border-radius: 4px;
`;

const Params = styled.button`
  display: block;
  width: 270px;
  height: 33px;
  margin-left: 4px;
  background: #fdfdfd;
  border: 1px solid #c8c8c8;
  border-radius: 4px;
`;

const Block = styled.section`
  margin-top: 4px;
  border-top: 2px solid ${line};
`;

const Caption = styled.label`
  display: block;
  padding-left: 3px;
  color: #777;
`;

const DefaultTitle = styled.div`
  padding: 10px 0 5px 3px;
`;

const DefaultRow = styled.div`
  display: flex;
  align-items: center;
  margin-bottom: 8px;
  padding-left: 3px;
`;

const Gap = styled.span`
  flex: none;
  width: 93px;
`;

const Filter = styled.div`
  padding-top: 11px;
  border-top: 1px solid ${line};
`;

const SelectBox = styled.div`
  display: grid;
  grid-template-columns: 1fr 16px;
  align-items: center;
  width: 272px;
  height: 34px;
  margin: 4px 0 0 3px;
  background: #fff;
  border: 1px solid #868686;
`;

const Select = styled.select`
  grid-area: 1 / 1 / 2 / 3;
  height: 32px;
  padding: 0 20px 0 7px;
  appearance: none;
  background: none;
  border: 0;
`;

const SelectMark = styled.span`
  grid-area: 1 / 2 / 2 / 3;
  justify-self: end;
  width: 8px;
  height: 8px;
  margin: 0 10px 4px 0;
  transform: rotate(45deg);
  border: solid #555;
  border-width: 0 1px 1px 0;
  pointer-events: none;
`;

type Node = [number, string, string, boolean?];
const tree: Node[] = [
  [0, "bookp", "Без имени", true], [1, "folder", "АР Проект", true], [2, "sheet", "Титульный лист"],
  [2, "sheet", "1 СОСТАВ ПРОЕКТА", true], [3, "sheetg", "РД-АР Ведомость рабочих чертежей"],
  [2, "sheet", "2 ОБМЕРНЫЙ ПЛАН СТЕН"], [1, "folderd", "Основные", true], [2, "master", "Обложка"],
  [2, "master", "Титульный лист"], [2, "master", "А4 - К - Ф3"], [2, "master", "А4 - К - Ф5"],
  [2, "master", "А4 - К - Ф6"], [2, "masterc", "А3 - А - Ф3"], [2, "master", "А3 - К - Ф3"],
  [2, "master", "А2 - А"], [2, "master", "А1 - А"], [2, "master", "А0 - А"], [2, "master", "А2 - К"], [2, "master", "А1 - К"],
];

function Organizer() {
  return (
    <Panel>
      <Grip $w={107} />
      <PanelTabs>
        <Tool $w={45} $h={44} aria-label="Карта проекта"><Icon name="hproj" /></Tool>
        <Divider $w={18} $at={8} $h={28} />
        <Tool $w={45} $h={44} aria-label="Карта видов"><Icon name="hframe" /></Tool>
        <Tool $w={45} $h={44} $on aria-label="Книга макетов"><Icon name="book" /></Tool>
        <Tool $w={45} $h={44} aria-label="Наборы издателя"><Icon name="pages" /></Tool>
        <Push />
        <PanelButton aria-label="Меню"><Icon name="menu" /><Right /></PanelButton>
      </PanelTabs>
      <SearchRow>
        <SearchBox>
          <Icon name="lens" />
          <SearchInput placeholder="Поиск по Книге..." aria-label="Поиск по Книге" />
        </SearchBox>
        <PanelButton aria-label="Настройка"><Icon name="gear" scale={0.9} /><Right /></PanelButton>
      </SearchRow>
      <TreeWrap>
        <Tree>
          {tree.map(([level, icon, text, open], i) => (
            <Row key={i} $level={level} $on={i === 2}>
              <Chevron $show={!!open} />
              <Icon name={icon} />
              <RowText>{text}</RowText>
            </Row>
          ))}
        </Tree>
        <ScrollV />
      </TreeWrap>
      <ScrollH />
      <Actions>
        {["newl", "newm", "newf", "list", "sync", "del"].map((n) => (
          <Tool key={n} $w={45} $h={64} aria-label={n}><Icon name={n} /></Tool>
        ))}
      </Actions>
      <PanelHead><Mark><Down $c="#333" /></Mark>Свойства</PanelHead>
      <Fields>
        <Icon name="sheet" scale={0.75} />
        <NamePair>
          <Field aria-label="Номер" defaultValue="" />
          <Field aria-label="Имя" defaultValue="Титульный лист" />
        </NamePair>
        <Icon name="master" scale={0.75} />
        <MasterButton>Титульный лист<Right /></MasterButton>
        <Icon name="dims" scale={0.75} />
        <span>420 / 297</span>
        <Icon name="sub" scale={0.75} />
        <span />
      </Fields>
      <Params>Параметры...</Params>
      <Block>
        <Grip $w={107} />
        <DefaultTitle>Элементы по Умолчанию:</DefaultTitle>
        <DefaultRow>
          <Tool $w={45} $h={44} $on aria-label="Существующие"><Icon name="bricks" /></Tool>
          <Tool $w={45} $h={44} aria-label="Сносимые"><Icon name="dozer" /></Tool>
          <Tool $w={45} $h={44} aria-label="Новые"><Icon name="crane" /></Tool>
          <Gap />
          <PanelButton $h={42} aria-label="Этажи"><Icon name="stack" /></PanelButton>
        </DefaultRow>
        <Filter>
          <Caption htmlFor="reno-filter">Фильтр Реконструкции:</Caption>
          <SelectBox>
            <Select id="reno-filter"><option>00 Показать Все Элементы</option></Select>
            <SelectMark />
          </SelectBox>
        </Filter>
      </Block>
    </Panel>
  );
}

/* ---------- bottom bars ---------- */

const Bottom = styled.div`
  display: flex;
  flex: none;
  height: 54px;
  padding-left: 129px;
  border-top: 1px solid #d6d6d6;
`;

const BottomLine = styled(Divider)`
  margin-top: 5px;
`;

const BottomTool = styled(Tool)`
  margin-top: 2px;
`;

const LowTool = styled(Tool)`
  margin-top: 12px;
`;

const LayerGroup = styled.div<{ $w: number }>`
  width: ${(p) => p.$w}px;
  margin: 4px 0;
  padding-left: 5px;
  border-left: 1px solid #8c8c8c;
  font-size: 16px;
`;

const LayerIcons = styled.div`
  display: flex;
`;

const bottomItems: Item[] = [
  ...I("arrowp"), sep, ...I("walk", "cam", "orbit"), sep, ...I("globe", "snlock", "hfocus"), sep, ...I("tri3", "mirror"), sep,
  on("lhatch"), ...I("harrow"), on("trap"), ...I("colarr", "colblue", "colin", "marr", "hh", "hh1"),
  on("slant"), on("node"), ...I("noded"), on("zone"), on("overlap"), on("onetwo"), sep,
  ...I("brk", "hblue", "abc", "pic", "curve"), sep, ...I("roofd"), sep, ...I("fold"), sep, ...I("sched"), sep,
];

const Status = styled.footer`
  display: flex;
  align-items: center;
  flex: none;
  height: 33px;
  padding: 3px 0 0 2px;
  border-top: 1px solid #d6d6d6;
`;

const StatusIcon = styled.button`
  display: grid;
  place-items: center;
  width: 40px;
  margin-left: auto;
`;

const Brand = styled.div`
  width: 196px;
  border: solid #d0d0d0;
  border-width: 0 1px;
  color: #8f9598;
  font: 19px/30px Lato, sans-serif;
  text-align: center;
  b { font-weight: 700; }
`;

const BrandEnd = styled.span`
  width: 29px;
`;

const menus = ["Файл", "Редактор", "Вид", "Конструирование", "Документ", "Параметры", "Teamwork", "Окно", "EPTAR Solutions", "CI Tools", "LAND4", "LiveSync®", "ModelPort", "Enscape", "Помощь"];

const tabs: [string, string][] = [
  ["plan", "[1. 1-й этаж]"], ["master", "[Титульный лист]"], ["sheet", "[Титульный лист]"],
  ["sheetd", "[РД-АР Ведомость рабочих чертежей ос..."], ["cube", "[3D / Все]"],
];

function WindowButtons({ w, s, stroke }: { w: number; s: number; stroke: number }) {
  const paths = ["M1 8H15", "M1 4H11V15H1zM4 4V1H15V12H11", "M1 1L15 15M15 1L1 15"];
  return (
    <Controls>
      {paths.map((d, i) => (
        <Control key={d} $w={w} aria-label={["Свернуть", "Развернуть", "Закрыть"][i]}>
          <Drawing width={s} height={s} viewBox="0 0 16 16" fill="none" stroke="#111" strokeWidth={stroke}><path d={d} /></Drawing>
        </Control>
      ))}
    </Controls>
  );
}

export default function App() {
  return (
    <Window>
      <Global />
      <TitleBar>
        <Drawing width="20" height="22" viewBox="0 0 20 22" fill="none">
          <rect x="0" y="1" width="20" height="20" rx="4" fill="#fff" stroke="#ccd3dd" />
          <path d="M3 18C5 12 7 5 12 4C15 4 16 6 16 9" stroke="#2a62c9" strokeWidth="2" />
          <path d="M16 11V13" stroke="#2a62c9" strokeWidth="2" />
        </Drawing>
        <span>Без имени - Archicad 27</span>
        <WindowButtons w={69} s={16} stroke={1} />
      </TitleBar>
      <MenuBar>
        {menus.map((m) => <button key={m}>{m}</button>)}
        <WindowButtons w={21} s={12} stroke={2} />
      </MenuBar>
      <ToolBar>
        <Divider $w={6} $h={24} />
        {topItems.map((item, i) => <TopTool key={i} item={item} />)}
      </ToolBar>
      <Body>
        <Work>
          <InfoBox>
            <InfoTitle>Основная:</InfoTitle>
            <InfoRow>
              <InfoGrip />
              <InfoButton aria-label="Метод"><Icon name="poly2" scale={0.9} /><Right /></InfoButton>
              <InfoButton aria-label="Бегущая рамка"><Icon name="marqc" scale={0.9} /><Right /></InfoButton>
              <InfoButton $on aria-label="Магнит"><Icon name="magnet" scale={0.8} /></InfoButton>
              <InfoButton $big aria-label="Указатель"><Icon name="cursor" /><Right /></InfoButton>
            </InfoRow>
          </InfoBox>
          <Stage>
            <ToolBox>
              <Grip $w={58} />
              <PairTop>
                <Tool $w={66} $on aria-label="Указатель"><Icon name="cursor" /></Tool>
                <Tool $w={66} aria-label="Бегущая рамка"><Icon name="marquee" w={30} h={32} /></Tool>
              </PairTop>
              <Section><Mark><Down $c="#333" /></Mark><SectionText>Конструирование</SectionText></Section>
              <Pair>
                {toolNames.map((n) => (
                  <Tool key={n} $w={66} aria-label={n}><Icon name={n} w={44} h={36} /></Tool>
                ))}
              </Pair>
              <Section><Mark><Right /></Mark><SectionText>Проекция</SectionText></Section>
              <Section><Mark><Right /></Mark><SectionText>Документирование</SectionText></Section>
            </ToolBox>
            <Center>
              <Tabs>
                <TabGrid aria-label="Обзор вкладок"><Icon name="four" /></TabGrid>
                {tabs.map(([icon, text], i) => (
                  <Tab key={i} $on={i === 0} $edge={i > 2}>
                    <Icon name={icon} />
                    <TabText>{text}</TabText>
                    {i === 0 && <Icon name="close" />}
                  </Tab>
                ))}
                <TabMenu aria-label="Виды"><Icon name="hview" /><Down $c="#333" /></TabMenu>
              </Tabs>
              <Canvas>
                <Plan />
                <Handle $side="top" />
                <Handle $side="bottom" />
                <Handle $side="left" />
                <Handle $side="right" />
              </Canvas>
              <Quick>
                <QuickZoom>
                  {["zback", "zfwd", "zin"].map((n) => (
                    <Tool key={n} $w={35} $h={26} aria-label={n}><Icon name={n} scale={0.9} /></Tool>
                  ))}
                </QuickZoom>
                {quick.map(([icon, text]) => (
                  <QuickCell key={icon}>
                    <QuickIcon><Icon name={icon} scale={0.8} /></QuickIcon>
                    <QuickText>{text}</QuickText>
                    <Right />
                  </QuickCell>
                ))}
              </Quick>
            </Center>
          </Stage>
        </Work>
        <Organizer />
      </Body>
      <Bottom>
        <BottomLine $w={5} $at={4} $h={24} />
        {bottomItems.map((item, i) =>
          item.k === "sep" ? (
            <BottomLine key={i} $at={5} $h={28} />
          ) : (
            <BottomTool key={i} $w={38} $h={32} $on={item.k === "on"} aria-label={item.n}><Icon name={item.n as string} scale={0.95} /></BottomTool>
          )
        )}
        <LowTool $w={46} $h={32} aria-label="Видимость"><Icon name="eyes" /></LowTool>
        <LowTool $w={46} $h={32} aria-label="Блокировка"><Icon name="locks" /></LowTool>
        <LayerGroup $w={144}>
          Слои Выбр.Эл-ов
          <LayerIcons>
            {["eyeoffg", "lockg", "unlock"].map((n) => <Tool key={n} $w={45} $h={22} aria-label={n}><Icon name={n} scale={0.85} /></Tool>)}
          </LayerIcons>
        </LayerGroup>
        <LayerGroup $w={142}>
          Всех Слоев:
          <LayerIcons>
            {["eyeoff", "lock"].map((n) => <Tool key={n} $w={45} $h={22} aria-label={n}><Icon name={n} scale={0.85} /></Tool>)}
          </LayerIcons>
        </LayerGroup>
        <LayerGroup $w={50}>
          {["redos", "undos"].map((n) => <Tool key={n} $w={45} $h={22} aria-label={n}><Icon name={n} scale={0.8} /></Tool>)}
        </LayerGroup>
      </Bottom>
      <Status>
        <span>Щелкните на элементе или начертите область выбора. Нажмите и не отпускайте Ctrl+Shift для переключения выбора элемента/подэлемента.</span>
        <StatusIcon aria-label="Окна"><Icon name="wins" scale={0.9} /></StatusIcon>
        <Brand><b>GRAPHISOFT</b> ID</Brand>
        <BrandEnd />
      </Status>
    </Window>
  );
}
